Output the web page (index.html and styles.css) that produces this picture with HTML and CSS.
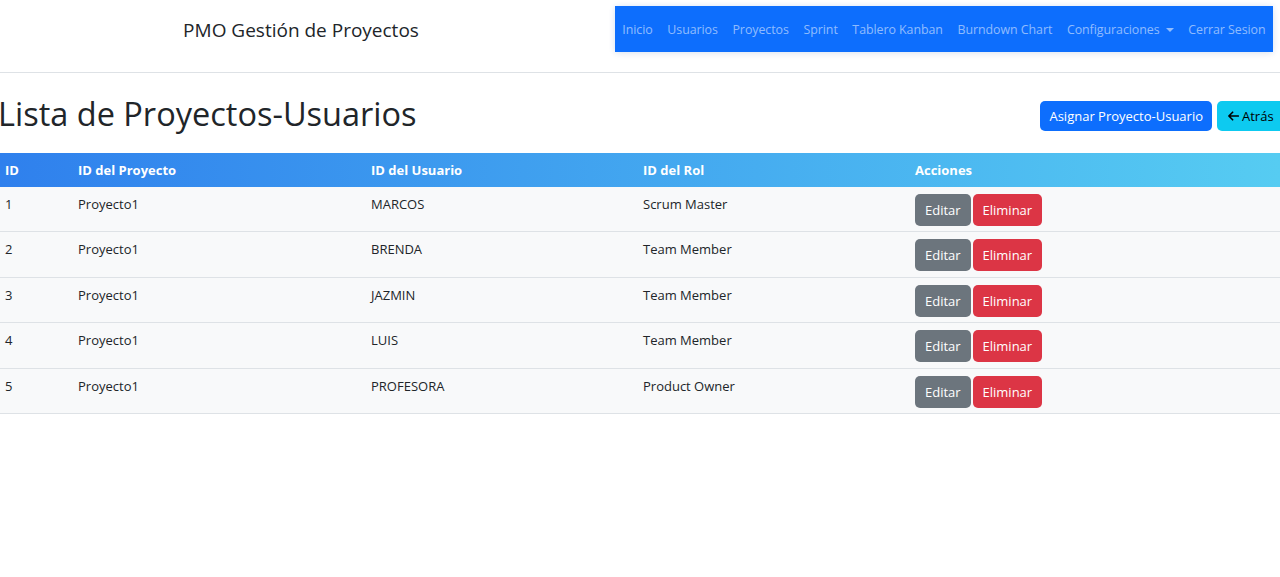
FILE: index.html
```html
<!DOCTYPE html>
<html lang="es">
<head>
<meta charset="utf-8">
<title>PMO Gestión de Proyectos</title>
<link rel="stylesheet" href="styles.css">
</head>
<body>
<header class="topbar">
  <div class="brand">PMO Gestión de Proyectos</div>
  <nav class="mainnav">
    <a href="#">Inicio</a>
    <a href="#">Usuarios</a>
    <a href="#">Proyectos</a>
    <a href="#">Sprint</a>
    <a href="#">Tablero Kanban</a>
    <a href="#">Burndown Chart</a>
    <a href="#" class="dropdown">Configuraciones <span class="caret"></span></a>
    <a href="#">Cerrar Sesion</a>
  </nav>
</header>
<main class="content">
  <div class="titlebar">
    <h1>Lista de Proyectos-Usuarios</h1>
    <div class="actions">
      <a href="#" class="btn btn-primary">Asignar Proyecto-Usuario</a>
      <a href="#" class="btn btn-info"><svg class="arrow" viewBox="0 0 16 16" width="12" height="12"><path d="M15 8H2.5M7.5 3 2.5 8l5 5" fill="none" stroke="currentColor" stroke-width="2.2" stroke-linecap="round" stroke-linejoin="round"/></svg>Atrás</a>
    </div>
  </div>
  <table class="grid">
    <thead>
      <tr>
        <th class="c-id">ID</th>
        <th class="c-proj">ID del Proyecto</th>
        <th class="c-user">ID del Usuario</th>
        <th class="c-rol">ID del Rol</th>
        <th>Acciones</th>
      </tr>
    </thead>
    <tbody>
      <tr><td>1</td><td>Proyecto1</td><td>MARCOS</td><td>Scrum Master</td><td><a class="btn btn-sec" href="#">Editar</a> <a class="btn btn-danger" href="#">Eliminar</a></td></tr>
      <tr><td>2</td><td>Proyecto1</td><td>BRENDA</td><td>Team Member</td><td><a class="btn btn-sec" href="#">Editar</a> <a class="btn btn-danger" href="#">Eliminar</a></td></tr>
      <tr><td>3</td><td>Proyecto1</td><td>JAZMIN</td><td>Team Member</td><td><a class="btn btn-sec" href="#">Editar</a> <a class="btn btn-danger" href="#">Eliminar</a></td></tr>
      <tr><td>4</td><td>Proyecto1</td><td>LUIS</td><td>Team Member</td><td><a class="btn btn-sec" href="#">Editar</a> <a class="btn btn-danger" href="#">Eliminar</a></td></tr>
      <tr><td>5</td><td>Proyecto1</td><td>PROFESORA</td><td>Product Owner</td><td><a class="btn btn-sec" href="#">Editar</a> <a class="btn btn-danger" href="#">Eliminar</a></td></tr>
    </tbody>
  </table>
</main>
</body>
</html>
```

FILE: styles.css
```css
* { box-sizing: border-box; }
html, body { margin: 0; padding: 0; background: #fff; }
body {
  font-family: "Open Sans", "Noto Sans", "Liberation Sans", sans-serif;
  color: #212529;
  font-size: 13px;
  line-height: 1.5;
}
a { text-decoration: none; }

.topbar {
  display: flex;
  align-items: flex-start;
  height: 73px;
  border-bottom: 1px solid #dee2e6;
}
.brand {
  width: 602px;
  text-align: center;
  font-size: 19px;
  line-height: 24px;
  padding-top: 18px;
  color: #212529;
}
.mainnav {
  margin-left: 13px;
  margin-top: 6px;
  width: 658px;
  height: 46px;
  background: #0d6efd;
  display: flex;
  align-items: center;
  padding: 3px 0 0 0;
  overflow: hidden;
  box-shadow: 0 0 6px rgba(13, 110, 253, 0.12), 0 2px 8px rgba(0,0,0,0.06);
}
.mainnav a {
  color: rgba(255, 255, 255, 0.55);
  font-size: 12.4px;
  letter-spacing: -0.05px;
  padding: 0 7.3px;
  white-space: nowrap;
}
.caret {
  display: inline-block;
  width: 0; height: 0;
  margin-left: 3px;
  vertical-align: 2px;
  border-top: 4px solid currentColor;
  border-left: 4px solid transparent;
  border-right: 4px solid transparent;
}

.titlebar {
  display: flex;
  justify-content: space-between;
  align-items: flex-start;
  height: 80px;
}
h1 {
  margin: 0 0 0 -2px;
  padding-top: 21px;
  font-size: 32.5px;
  font-weight: 500;
  line-height: 40px;
}
.actions {
  display: flex;
  gap: 5px;
  padding-top: 28px;
  margin-right: -20px;
}
.btn {
  display: inline-block;
  font-size: 13px;
  line-height: 20px;
  padding: 5px 10px;
  border-radius: 5px;
  color: #fff;
  white-space: nowrap;
}
.btn-primary { background: #0d6efd; padding: 5px 9px; }
.btn-info { background: #0dcaf0; color: #000; width: 83px; }
.arrow { vertical-align: -1px; margin-right: 3px; }
.btn-sec { background: #6c757d; padding: 6px 10px 5px; line-height: 21px; }
.btn-danger { background: #dc3545; padding: 6px 9.5px 5px; line-height: 21px; margin-left: -1px; }

.grid {
  width: 100%;
  border-collapse: collapse;
  font-size: 13px;
}
.grid th {
  text-align: left;
  color: #fff;
  font-weight: 700;
  padding: 7px 5px;
  line-height: 20px;
}
.grid thead tr {
  background: linear-gradient(to right, #2F80ED, #56CCF2);
}
.grid td {
  background: #f8f9fa;
  padding: 7px 5px 5.4px;
  vertical-align: top;
  line-height: 21px;
  border-bottom: 1px solid #dee2e6;
}
.grid td .btn { vertical-align: top; }
.c-id { width: 73px; }
.c-proj { width: 293px; }
.c-user { width: 272px; }
.c-rol { width: 272px; }
```
